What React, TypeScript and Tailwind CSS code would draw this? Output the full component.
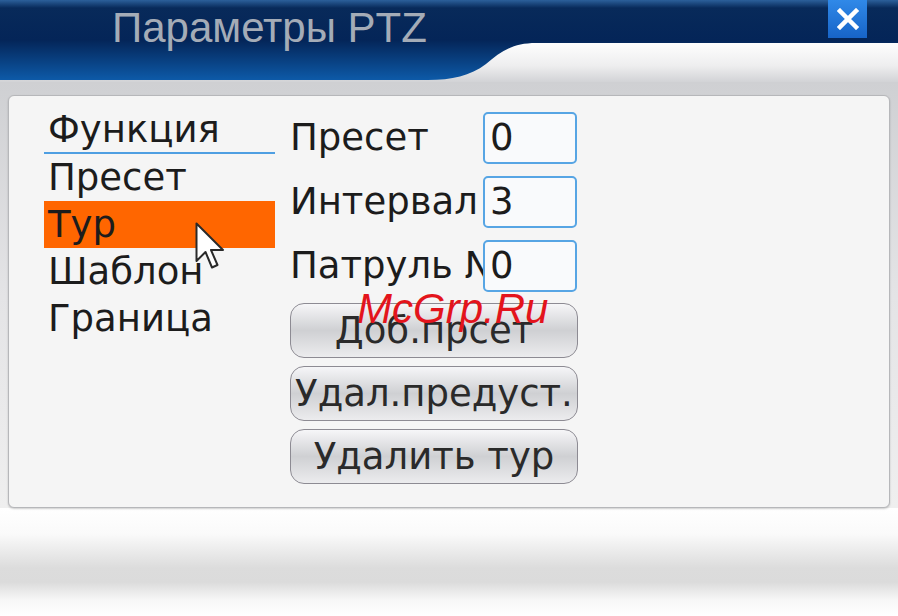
import React from "react";

const menu = ["Функция", "Пресет", "Тур", "Шаблон", "Граница"];

const fields = [
  { label: "Пресет", value: "0" },
  { label: "Интервал", value: "3" },
  { label: "Патруль №", value: "0" },
];

const actions = ["Доб.прсет", "Удал.предуст.", "Удалить тур"];

function HeaderShape() {
  return (
    <svg className="absolute inset-0" width="898" height="82" viewBox="0 0 898 82">
      <defs>
        <linearGradient id="hdrBlue" x1="0" y1="0" x2="0" y2="1">
          <stop offset="0" stopColor="#2c609b" />
          <stop offset="0.1" stopColor="#082a5a" />
          <stop offset="0.5" stopColor="#042558" />
          <stop offset="1" stopColor="#0d5aa8" />
        </linearGradient>
        <linearGradient id="hdrLight" x1="0" y1="0" x2="0" y2="1">
          <stop offset="0.5" stopColor="#ffffff" />
          <stop offset="0.8" stopColor="#eeeeef" />
          <stop offset="1" stopColor="#d2d3d6" />
        </linearGradient>
      </defs>
      <rect x="0" y="0" width="898" height="82" fill="url(#hdrLight)" />
      <path
        d="M0 0 H898 V43 H536 C512 43 500 52 486 64 C470 76 452 80 428 80 H0 Z"
        fill="url(#hdrBlue)"
      />
    </svg>
  );
}

function Pointer() {
  return (
    <svg
      className="absolute left-[186px] top-[126px]"
      width="32"
      height="50"
      viewBox="0 0 32 50"
    >
      <path
        d="M1.5 1.5 L1.5 39 L10.5 30 L17 45.5 L22.5 43 L16 28 L28 28 Z"
        fill="#ffffff"
        stroke="#2a2a2a"
        strokeWidth="2"
        strokeLinejoin="round"
      />
    </svg>
  );
}

export default function App() {
  return (
    <div className="flex h-[616px] w-[898px] flex-col overflow-hidden bg-white font-['DejaVu_Sans',sans-serif]">
      {/* title bar */}
      <div className="relative h-[82px] shrink-0">
        <HeaderShape />
        <div className="relative pl-[112px] pt-[7px] font-['Liberation_Sans',Arial,sans-serif] text-[42px] leading-[42px] text-[#a4acb7]">
          Параметры PTZ
        </div>
        <button
          type="button"
          className="absolute right-[31px] top-0 flex h-[38px] w-[39px] items-center justify-center bg-gradient-to-b from-[#3089e8] to-[#1764c8]"
        >
          <svg width="22" height="22" viewBox="0 0 22 22">
            <path d="M3 3 L19 19 M19 3 L3 19" stroke="#ffffff" strokeWidth="4.5" strokeLinecap="square" />
          </svg>
        </button>
      </div>

      {/* body */}
      <div className="h-[426px] shrink-0 bg-gradient-to-b from-[#cfd0d3] via-[#e4e4e6] to-[#efefef] px-2 pt-[13px]">
        <div className="relative flex h-[413px] gap-[15px] rounded-[6px] border border-[#b6b7ba] bg-[#f5f5f5] pl-[35px] pt-[12px] text-[37px] text-[#1c1c1c] shadow-[0_1px_2px_rgba(0,0,0,0.2)]">
          <div className="flex w-[231px] flex-col">
            {menu.map((item, i) =>
              i === 0 ? (
                <div key={item} className="h-[46px] border-b-2 border-[#4f9fe2] px-1 leading-[44px]">
                  {item}
                </div>
              ) : (
                <div
                  key={item}
                  className={`h-[47px] px-1 leading-[47px] ${i === 2 ? "bg-[#ff6600]" : ""}`}
                >
                  {item}
                </div>
              )
            )}
          </div>

          <div className="flex w-[288px] flex-col pt-[4px]">
            <div className="flex flex-col gap-3">
              {fields.map((f) => (
                <div key={f.label} className="flex h-[52px] items-center">
                  <div className="w-[193px] overflow-hidden whitespace-nowrap">{f.label}</div>
                  <div className="flex h-[52px] w-[94px] items-center rounded-[5px] border-2 border-[#57a5e4] bg-[#f9fafc] pl-[5px]">
                    {f.value}
                  </div>
                </div>
              ))}
            </div>
            <div className="mt-[11px] flex flex-col gap-2">
              {actions.map((a) => (
                <button
                  key={a}
                  type="button"
                  className="flex h-[55px] items-center justify-center whitespace-nowrap rounded-[14px] border-[1.5px] border-[#8d8b93] bg-gradient-to-b from-[#f6f6f8] via-[#cfd0d3] to-[#ececee] text-[37px] text-[#2a2a2a]"
                >
                  {a}
                </button>
              ))}
            </div>
          </div>

          <Pointer />

          <div className="absolute left-[348px] top-[192px] font-['Liberation_Sans',Arial,sans-serif] text-[42px] italic leading-[42px] text-[#e3141c]">
            McGrp.Ru
          </div>
        </div>
      </div>

      {/* bottom strip */}
      <div className="h-[108px] shrink-0 bg-[linear-gradient(to_bottom,#ffffff_0px,#fafafa_26px,#dcdcdc_60px,#dbdbdb_74px,#f7f7f7_92px,#ffffff_108px)]" />
    </div>
  );
}
